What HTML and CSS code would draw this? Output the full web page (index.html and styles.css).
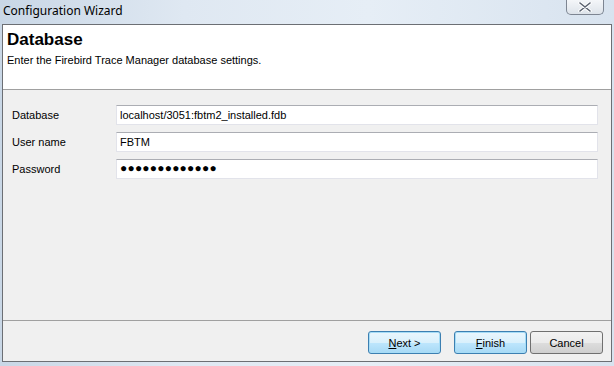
FILE: index.html
```html
<!DOCTYPE html>
<html>
<head>
<meta charset="utf-8">
<link rel="stylesheet" href="styles.css">
</head>
<body>
<div class="window">
  <div class="titlebar">
    <span class="title">Configuration Wizard</span>
    <span class="close"><svg width="14" height="10" viewBox="0 0 14 10"><path d="M2 1 L12 9 M12 1 L2 9" stroke="#fff" stroke-width="3.4" stroke-linecap="round"/><path d="M2 1 L12 9 M12 1 L2 9" stroke="#5a6270" stroke-width="1.6" stroke-linecap="round"/></svg></span>
  </div>
  <div class="client">
    <div class="header">
      <div class="h-title">Database</div>
      <div class="h-sub">Enter the Firebird Trace Manager database settings.</div>
    </div>
    <div class="body">
      <div class="row"><label>Database</label><div class="input">localhost/3051:fbtm2_installed.fdb</div></div>
      <div class="row"><label>User name</label><div class="input">FBTM</div></div>
      <div class="row"><label>Password</label><div class="input pw">●●●●●●●●●●●●●</div></div>
    </div>
    <div class="footer">
      <div class="btn def"><u>N</u>ext &gt;</div>
      <div class="btn def"><u>F</u>inish</div>
      <div class="btn">Cancel</div>
    </div>
  </div>
</div>
</body>
</html>
```
FILE: styles.css
```css
html, body { margin: 0; padding: 0; }
body { width: 614px; height: 366px; overflow: hidden; font-family: "Liberation Sans", Arial, sans-serif; }
.window {
  width: 614px; height: 366px; box-sizing: border-box;
  background: linear-gradient(90deg, #c9d7e6 0%, #dfe8f2 30%, #e6eef6 60%, #d8e3ef 100%);
  padding: 0 2px 4px 2px;
  display: flex; flex-direction: column;
}
.titlebar { height: 24px; display: flex; align-items: flex-start; justify-content: space-between; }
.title { font-family: "Noto Sans", "Open Sans", sans-serif; font-size: 12px; color: #000; padding: 2px 0 0 1px; line-height: 18px; }
.close {
  width: 38px; height: 15px; margin-right: 8px; box-sizing: border-box;
  border: 1px solid #7d8592; border-top: none; border-radius: 0 0 5px 5px;
  background: linear-gradient(#f4f6f9, #dde3ea);
  display: flex; align-items: center; justify-content: center;
}
.client {
  flex: 1; border: 1px solid #6c6f74; background: #f0f0f0;
  display: flex; flex-direction: column;
}
.header { background: #fff; border-bottom: 1px solid #a0a0a0; padding: 6px 0 0 4px; box-sizing: border-box; height: 65px; }
.h-title { font-family: "Liberation Sans", Arial, sans-serif; font-weight: bold; font-size: 17px; line-height: 18px; color: #000; }
.h-sub { font-family: "Liberation Sans", Arial, sans-serif; font-size: 11px; color: #000; margin-top: 4px; line-height: 14px; }
.body { flex: 1; padding: 15px 0 0 9px; display: flex; flex-direction: column; gap: 7px; border-bottom: 1px solid #a0a0a0; }
.row { display: flex; align-items: center; height: 20px; }
.row label { width: 104px; font-size: 11px; color: #000; }
.input {
  width: 482px; height: 20px; box-sizing: border-box; background: #fff;
  border: 1px solid #e2e3ea; border-top-color: #abadb3;
  font-size: 11px; line-height: 18px; padding-left: 3px; color: #000;
}
.input.pw { font-size: 12px; letter-spacing: 0.2px; line-height: 17px; }
.footer { height: 40px; display: flex; justify-content: flex-end; align-items: flex-start; padding: 10px 8px 0 0; box-sizing: border-box; }
.btn {
  width: 73px; height: 23px; box-sizing: border-box; border: 1px solid #707070; border-radius: 3px;
  background: linear-gradient(#f2f2f2 0%, #ebebeb 50%, #dddddd 51%, #cfcfcf 100%);
  font-size: 11px; display: flex; align-items: center; justify-content: center; margin-left: 3px;
}
.btn.def { border-color: #3c7fb1; box-shadow: inset 0 0 0 1px #a6dcf6; background: linear-gradient(#eaf6fd 0%, #d9f0fc 50%, #bee6fd 51%, #a7d9f5 100%); }
.btn.def + .btn.def { margin-left: 13px; }
```
